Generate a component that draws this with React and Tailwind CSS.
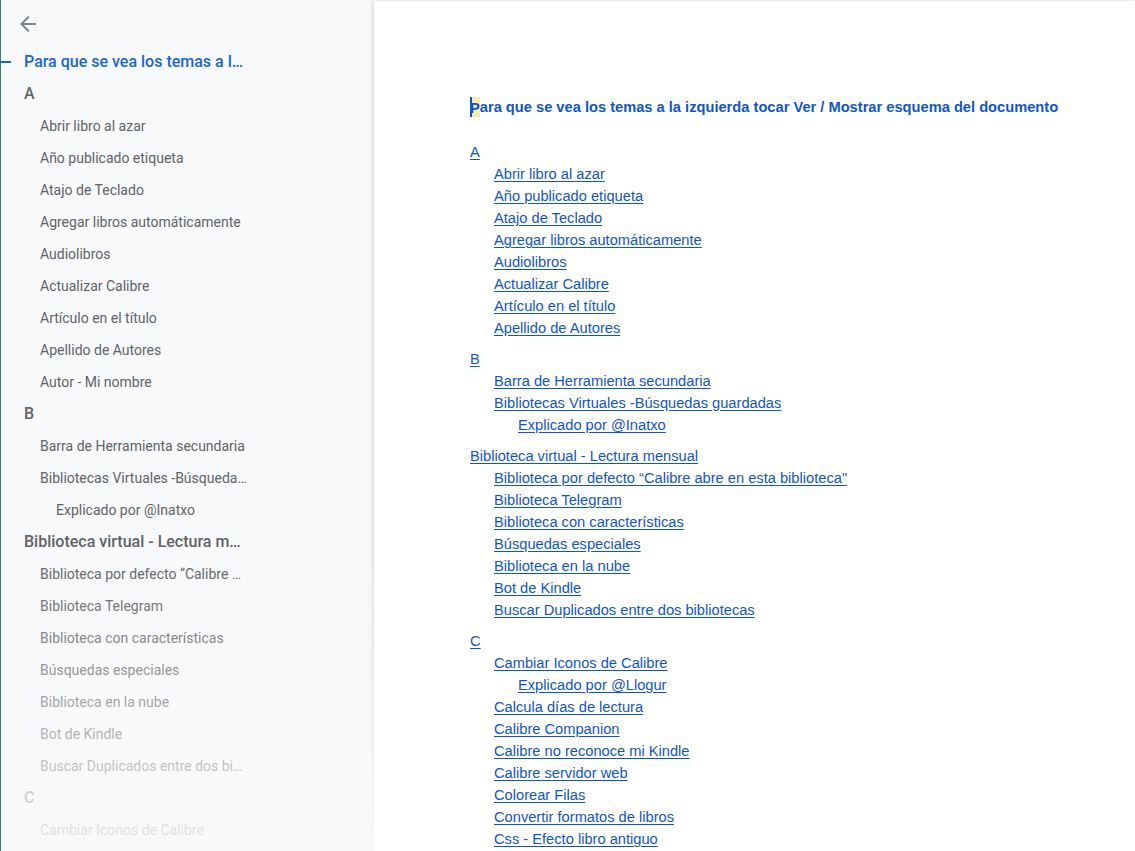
import React from "react";

const OUTLINE = [
  { t: "Para que se vea los temas a la izquierda tocar Ver / Mostrar esquema del documento", l: 0, active: true },
  { t: "A", l: 0 },
  { t: "Abrir libro al azar", l: 1 },
  { t: "Año publicado etiqueta", l: 1 },
  { t: "Atajo de Teclado", l: 1 },
  { t: "Agregar libros automáticamente", l: 1 },
  { t: "Audiolibros", l: 1 },
  { t: "Actualizar Calibre", l: 1 },
  { t: "Artículo en el título", l: 1 },
  { t: "Apellido de Autores", l: 1 },
  { t: "Autor - Mi nombre", l: 1 },
  { t: "B", l: 0 },
  { t: "Barra de Herramienta secundaria", l: 1 },
  { t: "Bibliotecas Virtuales -Búsquedas guardadas", l: 1 },
  { t: "Explicado por @Inatxo", l: 2 },
  { t: "Biblioteca virtual - Lectura mensual", l: 0 },
  { t: "Biblioteca por defecto “Calibre abre en esta biblioteca”", l: 1 },
  { t: "Biblioteca Telegram", l: 1 },
  { t: "Biblioteca con características", l: 1 },
  { t: "Búsquedas especiales", l: 1 },
  { t: "Biblioteca en la nube", l: 1 },
  { t: "Bot de Kindle", l: 1 },
  { t: "Buscar Duplicados entre dos bibliotecas", l: 1 },
  { t: "C", l: 0 },
  { t: "Cambiar Iconos de Calibre", l: 1 },
];

const DOC = [
  { t: "A", l: 0 },
  { t: "Abrir libro al azar", l: 1 },
  { t: "Año publicado etiqueta", l: 1 },
  { t: "Atajo de Teclado", l: 1 },
  { t: "Agregar libros automáticamente", l: 1 },
  { t: "Audiolibros", l: 1 },
  { t: "Actualizar Calibre", l: 1 },
  { t: "Artículo en el título", l: 1 },
  { t: "Apellido de Autores", l: 1 },
  { t: "B", l: 0 },
  { t: "Barra de Herramienta secundaria", l: 1 },
  { t: "Bibliotecas Virtuales -Búsquedas guardadas", l: 1 },
  { t: "Explicado por @Inatxo", l: 2 },
  { t: "Biblioteca virtual - Lectura mensual", l: 0 },
  { t: "Biblioteca por defecto \u201cCalibre abre en esta biblioteca\"", l: 1 },
  { t: "Biblioteca Telegram", l: 1 },
  { t: "Biblioteca con características", l: 1 },
  { t: "Búsquedas especiales", l: 1 },
  { t: "Biblioteca en la nube", l: 1 },
  { t: "Bot de Kindle", l: 1 },
  { t: "Buscar Duplicados entre dos bibliotecas", l: 1 },
  { t: "C", l: 0 },
  { t: "Cambiar Iconos de Calibre", l: 1 },
  { t: "Explicado por @Llogur", l: 2 },
  { t: "Calcula días de lectura", l: 1 },
  { t: "Calibre Companion", l: 1 },
  { t: "Calibre no reconoce mi Kindle", l: 1 },
  { t: "Calibre servidor web", l: 1 },
  { t: "Colorear Filas", l: 1 },
  { t: "Convertir formatos de libros", l: 1 },
  { t: "Css - Efecto libro antiguo", l: 1 },
  { t: "Columnas personalizadas", l: 1 },
];

function OutlineRow({ item }) {
  const pad = item.l === 0 ? "pl-[23px]" : item.l === 1 ? "pl-[39px]" : "pl-[55px]";
  let text = "text-sm text-[#5f6368]";
  if (item.l === 0) text = "text-base font-medium text-[#5f6368]";
  if (item.active) text = "text-base font-medium text-[#1967d2]";
  return (
    <div className={`relative flex h-8 items-center pr-6 ${pad}`}>
      {item.active && <span className="absolute -left-px top-[15px] h-[2px] w-[11px] bg-[#1967d2]" />}
      <span className={`truncate ${text}`}>{item.t}</span>
    </div>
  );
}

function DocRow({ item, first }) {
  if (item.l === 0) {
    return (
      <div className={`h-5 leading-[18px] ${first ? "mt-[25px]" : "mt-[11px]"}`}>
        <a href="#" className="text-[#1155cc] underline underline-offset-[2px]">
          {item.t}
        </a>
      </div>
    );
  }
  const pad = item.l === 1 ? "pl-6" : "pl-12";
  return (
    <div className={`h-[22px] leading-[22px] ${pad}`}>
      <a href="#" className="text-[#1155cc] underline underline-offset-[2px]">
        {item.t}
      </a>
    </div>
  );
}

export default function App() {
  return (
    <div className="flex h-[851px] w-full overflow-hidden bg-[#f8f9fa]" style={{ fontFamily: "Roboto, 'Noto Sans', sans-serif" }}>
      <aside className="relative w-[374px] shrink-0 border-l border-[#3f7c73]">
        <div className="flex h-[46px] items-start pl-[15px] pt-3">
          <svg width="24" height="24" viewBox="0 0 24 24" fill="#80868b">
            <path d="M20 11H7.83l5.59-5.59L12 4l-8 8 8 8 1.41-1.41L7.83 13H20v-2z" />
          </svg>
        </div>
        <nav className="w-[270px]">
          {OUTLINE.map((item, i) => (
            <OutlineRow key={i} item={item} />
          ))}
        </nav>
        <div className="pointer-events-none absolute bottom-0 left-0 h-[290px] w-full bg-linear-to-b from-[#f8f9fa]/0 to-[#f8f9fa]/90" />
      </aside>
      <main className="mt-px flex-1 bg-white pl-24 pt-[95px] shadow-[-2px_0_4px_rgba(60,64,67,0.15)]" style={{ fontFamily: "'Liberation Sans', Arial, sans-serif" }}>
        <div className="text-[14.67px]">
          <div className="h-[22px] leading-[22px] font-bold text-[#1155cc]">
            <span className="relative inline-block h-[20px] bg-[#fce8b2] align-top mt-px">
              <span className="absolute left-0 top-0 h-[20px] w-[2px] bg-[#1155cc]" />
              <span className="leading-[20px]">P</span>
            </span>
            ara que se vea los temas a la izquierda tocar Ver / Mostrar esquema del documento
          </div>
          {DOC.map((item, i) => (
            <DocRow key={i} item={item} first={i === 0} />
          ))}
        </div>
      </main>
    </div>
  );
}
